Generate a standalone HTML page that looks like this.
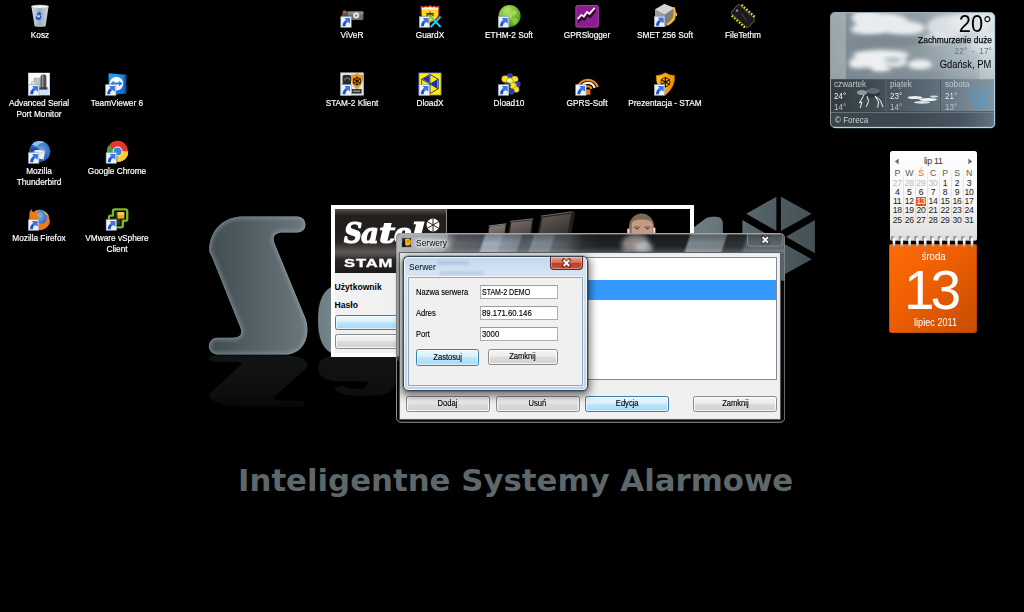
<!DOCTYPE html>
<html lang="pl">
<head>
<meta charset="utf-8">
<title>Pulpit - STAM-2 Klient</title>
<style>
html,body{margin:0;padding:0;background:#000;}
#d{position:relative;width:1024px;height:612px;overflow:hidden;background:#000;font-family:"Liberation Sans",sans-serif;}
#d *{box-sizing:border-box;}
.abs{position:absolute;}
/* desktop icons */
.ic{position:absolute;width:100px;margin-left:-50px;text-align:center;color:#fff;font-size:9.2px;line-height:10.8px;text-shadow:0 0 1.5px #000,0 1px 1.5px #000;white-space:nowrap;transform:scaleX(.9);-webkit-text-stroke:0.2px #fff;}
.ig{position:absolute;width:24px;height:24px;}
.sc{position:absolute;left:0;bottom:0;width:9px;height:9px;background:#f4f6fa;border:0.5px solid #9aa;}
.sc:after{content:"";position:absolute;left:2px;top:2px;width:5px;height:5px;background:#1c55c8;clip-path:polygon(20% 0,100% 0,100% 80%,75% 55%,30% 100%,0 70%,45% 25%);}
#slogan{position:absolute;left:238px;top:461.8px;font-family:"DejaVu Sans","Liberation Sans",sans-serif;font-weight:bold;font-size:30.8px;line-height:36px;color:#5e6769;white-space:nowrap;letter-spacing:0px;}

/* windows */
#login{position:absolute;left:331px;top:205px;width:362.5px;height:151.7px;background:#fff;}
#ban{position:absolute;left:4px;top:4px;width:355px;height:63.6px;background:#000;overflow:hidden;}
#banl{position:absolute;left:0;top:0;width:112.3px;height:63.6px;background:linear-gradient(180deg,#56524f 0,#3c3836 5%,#231f1e 11%,#221e1d 40%,#2c2827 52%,#45413f 60%,#5b5856 67%,#4e4a48 72%,#2b2726 79%,#1d1918 100%);border-right:1px solid #8e8b89;}
#logo{position:absolute;left:8.6px;top:6.2px;font:italic bold 28.6px/36px "DejaVu Serif",serif;color:#fff;letter-spacing:0;-webkit-text-stroke:1.2px #fff;white-space:nowrap;}
#logo span{display:inline-block;transform-origin:0 50%;}
#stam{position:absolute;left:9px;top:50.2px;font:bold 10px/10px "Liberation Sans",sans-serif;color:#fff;transform-origin:0 50%;transform:scaleX(1.66);letter-spacing:0.5px;white-space:nowrap;-webkit-text-stroke:0.3px #fff;}
#lbody{position:absolute;left:4px;top:67.6px;width:355px;height:80.6px;background:#f1f1f1;}
.lb{position:absolute;left:0.5px;font:bold 8.6px/11px "Liberation Sans",sans-serif;color:#000;}
.btn{position:absolute;height:15.8px;border:1px solid #8a8a8a;border-radius:2.5px;background:linear-gradient(180deg,#f4f4f4 0,#ececec 45%,#dddddd 50%,#d0d0d0 100%);box-shadow:inset 0 0 0 1px rgba(255,255,255,.75);font:8.8px/13.4px "Liberation Sans",sans-serif;color:#000;text-align:center;white-space:nowrap;}
.btn span,.fl span,.inp span{display:inline-block;transform:scaleX(.86);transform-origin:50% 50%;}
.fl span,.inp span{transform-origin:0 50%;}
.fl,.inp,.btn{-webkit-text-stroke:0.15px #000;}
.btn.hot{border-color:#3c7fb1;background:linear-gradient(180deg,#eaf6fd 0,#d9f0fc 45%,#bee6fd 50%,#a7d9f5 100%);box-shadow:inset 0 0 0 1px rgba(255,255,255,.6);}
#srv{position:absolute;left:396px;top:233.3px;width:389.3px;height:189.8px;border-radius:5px 5px 3px 3px;background:#060707;overflow:hidden;}
#srvglass{position:absolute;left:0;top:0;}
#srvcl{position:absolute;left:4.4px;top:19.4px;width:379.8px;height:166.2px;background:#f0f0f0;border:1px solid #e9ecee;box-shadow:0 0 0 0.9px #5d6164;}
#lst{position:absolute;left:2.4px;top:3.4px;width:373.4px;height:122.8px;background:#fff;border:1px solid #828790;}
#sel{position:absolute;left:0;right:0;top:21.6px;height:20.8px;background:#3399ff;}
.ttl{position:absolute;font:9.6px/12px "Liberation Sans",sans-serif;color:#000;white-space:nowrap;transform-origin:0 50%;transform:scaleX(.88);}
#dlg{position:absolute;left:403px;top:256px;width:185px;height:135px;border-radius:5px;border:1px solid #3b4653;background:linear-gradient(180deg,#c3d7ec 0,#d5e4f3 12%,#cfe0f1 18%,#bdd3ea 100%);box-shadow:0 0 0 0.6px rgba(0,0,0,.35),0 3px 9px 2px rgba(0,0,0,.55),inset 0 0 0 1px rgba(255,255,255,.75);}
#dlgcl{position:absolute;left:4px;top:20px;width:175px;height:109px;background:#f0f0f0;border:1px solid #8fa7bf;box-shadow:0 0 0 1px rgba(255,255,255,.7);}
#dclose{position:absolute;left:146.4px;top:-0.2px;width:33px;height:13.2px;border:1px solid #5a2820;border-top:0;border-radius:0 0 4px 4px;background:linear-gradient(180deg,#e5a396 0,#d4705d 45%,#c23a25 52%,#c8513a 100%);box-shadow:inset 0 0 0 1px rgba(255,255,255,.35);color:#fff;text-align:center;font:bold 10px/11px "Liberation Sans",sans-serif;text-shadow:0 0 2px #3a0d06;}
.fl{position:absolute;left:6.2px;font:8.8px/11px "Liberation Sans",sans-serif;color:#000;white-space:nowrap;}
.inp{position:absolute;left:70.3px;width:78.2px;height:14px;background:#fff;border:1px solid #abadb3;border-top-color:#9a9ca2;font:8.6px/12px "Liberation Sans",sans-serif;color:#000;padding-left:1.5px;white-space:nowrap;}

/* weather gadget */
#wx{position:absolute;left:830.6px;top:12.8px;width:163.6px;height:113.8px;border-radius:4px;overflow:hidden;background:#8b99a1;box-shadow:0 0 0 0.9px rgba(215,230,240,.75),0.7px 0.8px 0 0.5px rgba(110,195,235,.85);}
#wx .r{position:absolute;right:2.6px;text-align:right;white-space:nowrap;color:#000;transform-origin:100% 50%;}
#wx .dn{position:absolute;top:65.4px;font:9.6px/11px "Liberation Sans",sans-serif;color:#c2cad0;white-space:nowrap;transform-origin:0 50%;transform:scaleX(.85);}
#wx .hi{position:absolute;top:77.4px;font:9.8px/11px "Liberation Sans",sans-serif;color:#fff;text-shadow:0 0 1px #222;white-space:nowrap;transform-origin:0 50%;transform:scaleX(.82);}
#wx .lo{position:absolute;top:88px;font:9.8px/11px "Liberation Sans",sans-serif;color:#b8c1c7;white-space:nowrap;transform-origin:0 50%;transform:scaleX(.82);}
/* calendar gadget */
#cal1{position:absolute;left:889.6px;top:151px;width:87.8px;height:89.7px;border-radius:2.5px;background:linear-gradient(180deg,#fefefe 0,#f7f7f7 55%,#e6e6e6 85%,#dedede 100%);overflow:hidden;}
#cal1 span{position:absolute;width:14px;margin-left:-7px;text-align:center;font:8.6px/10px "Liberation Sans",sans-serif;color:#1c1c1c;letter-spacing:-0.3px;}
#cal1 span.h{color:#5a5a5a;font-size:8.8px;}
#cal1 span.g{color:#bdbdbd;}
#cal1 i{position:absolute;top:17px;width:1px;height:58px;background:linear-gradient(180deg,rgba(0,0,0,0),rgba(0,0,0,.09) 20%,rgba(0,0,0,.09) 80%,rgba(0,0,0,0));}
#cal2{position:absolute;left:889.4px;top:244px;width:87.2px;height:89px;border-radius:2px 2px 3px 3px;background:linear-gradient(135deg,#ff6b08 0,#f06003 40%,#c64c03 100%);color:#fff;text-align:center;box-shadow:inset 0 0 0 0.6px rgba(120,40,0,.5);}
</style>
</head>
<body>
<div id="d">

<!-- wallpaper -->
<svg class="abs" style="left:0;top:0" width="1024" height="612" viewBox="0 0 1024 612">
<defs>
<linearGradient id="gS" gradientUnits="userSpaceOnUse" x1="209" y1="0" x2="815" y2="0"><stop offset="0" stop-color="#404c51"/><stop offset="0.16" stop-color="#6a777c"/><stop offset="0.2" stop-color="#74848a"/><stop offset="0.5" stop-color="#7d8d93"/><stop offset="0.82" stop-color="#6c7b80"/><stop offset="0.91" stop-color="#536266"/><stop offset="1" stop-color="#435055"/></linearGradient>
<linearGradient id="gA" x1="0" x2="1" y1="0" y2="0"><stop offset="0" stop-color="#66727a"/><stop offset="1" stop-color="#30373a"/></linearGradient>
<linearGradient id="fade" x1="0" x2="0" y1="0" y2="1"><stop offset="0" stop-color="#fff" stop-opacity="0.15"/><stop offset="0.75" stop-color="#fff" stop-opacity="0.1"/><stop offset="1" stop-color="#fff" stop-opacity="0.04"/></linearGradient>
<clipPath id="cS"><use href="#S"/></clipPath><filter id="glowb" x="-10%" y="-10%" width="120%" height="120%"><feGaussianBlur stdDeviation="1.6"/></filter>
<mask id="mfade"><rect x="180" y="355" width="700" height="54" fill="url(#fade)"/></mask>
<path id="S" d="M209.200 250 C209.200 231 223.500 216.400 242 216.400 L297.400 216.400 A8.100 8.100 0 0 1 297.400 232.600 L283 232.600 C275.500 232.600 271.800 236.500 274.400 243 L305.500 318.400 C311 334 305 354.600 283.800 354.600 L217.200 354.600 A8.450 8.450 0 0 1 217.200 337.700 L233 337.700 C240.500 337.700 243 333.500 240.300 327.500 L212 257 C210 253 209.200 252 209.200 250 Z"/>
</defs>
<use href="#S" fill="url(#gS)"/>
<g clip-path="url(#cS)"><use href="#S" fill="none" stroke="#a9b9bf" stroke-opacity=".3" stroke-width="6" filter="url(#glowb)"/><use href="#S" fill="none" stroke="#b5c3c8" stroke-opacity=".28" stroke-width="1.4"/></g>
<!-- letter a (mostly hidden) -->
<g id="A" fill="url(#gS)"><path d="M318 320 C318 296 326 284 345 284 L384 284 L384 356 L345 356 C326 356 318 344 318 320 Z"/><path d="M334 268 Q338 245 362 245 Q396 245 396 280 L396 355.500 L368 355.500 L368 286 Q368 264 356 264 Q346 264 344 272 Z"/></g>
<!-- letter l top -->
<path d="M690 230.200 L705.500 218.600 Q708.500 216.800 712 216.800 L716 216.800 Q722.800 216.800 722.800 224 L722.800 240 L690 240 Z" fill="url(#gS)"/>
<!-- hexagon mark -->
<g fill="url(#gS)">
<polygon points="776.400,196.700 746.200,213.800 776.400,230.900"/>
<polygon points="780.900,196.700 811.800,213.800 780.900,230.900"/>
<polygon points="814.900,220.100 814.900,253.300 786,236.700"/>
<polygon points="742.400,220.100 742.400,253.300 771.300,236.700"/>
<polygon points="780.900,276.300 811.800,259.200 780.900,242.100"/>
<polygon points="776.400,276.300 746.200,259.200 776.400,242.100"/>
</g>
<!-- floor reflections -->
<g mask="url(#mfade)">
<g transform="translate(0,486.700) scale(1,-0.37)" fill="#7c888c">
<use href="#S"/>
<g fill="#7c888c"><path d="M318 320 C318 296 326 284 345 284 L384 284 L384 356 L345 356 C326 356 318 344 318 320 Z"/><path d="M334 268 Q338 245 362 245 Q396 245 396 280 L396 355.500 L368 355.500 L368 286 Q368 264 356 264 Q346 264 344 272 Z"/></g>
</g>
</g>
</svg>
<div id="slogan">Inteligentne Systemy Alarmowe</div>


<!-- desktop icons -->
<svg class="abs" style="left:27.5px;top:4px" width="24" height="24" viewBox="0 0 24 24"><defs><linearGradient id="bin" x1="0" x2="1"><stop offset="0" stop-color="#e8eef4"/><stop offset="0.5" stop-color="#aebccb"/><stop offset="1" stop-color="#dfe7ef"/></linearGradient></defs><path d="M3.4 2.2L20.6 2.2 17.6 22.2Q12 23.6 6.6 22.2Z" fill="url(#bin)" opacity="0.92"/><ellipse cx="12" cy="2.6" rx="8.6" ry="1.5" fill="#f4f7fa" stroke="#c3ccd6" stroke-width="0.6"/><path d="M9.2 9.2l2.6-1.6 1.8 2.6-1.2.6 1.2 2.2-1.6 3-3.4-.2-1.2-2.6 1.6-1.2z" fill="#1f5fd3"/><circle cx="10.6" cy="12.2" r="1.2" fill="#cfe0f5"/></svg>
<div class="ic" style="left:39.5px;top:30.1px">Kosz</div>
<svg class="abs" style="left:340px;top:4px" width="24" height="24" viewBox="0 0 24 24"><rect x="7" y="7.4" width="16.4" height="8.6" rx="1.2" fill="#6e6e6e"/><rect x="7" y="7.4" width="16.4" height="3" rx="1" fill="#8c8c8c"/><circle cx="16.2" cy="11.6" r="3" fill="#e9e9e9"/><circle cx="16.2" cy="11.6" r="1.2" fill="#777"/><path d="M1.5 13 Q1.5 7 5 7 Q8 7 8.2 12 L8 14 L1.5 14Z" fill="#6a4a3c"/><circle cx="4.6" cy="8" r="1.8" fill="#8a6a58"/><g transform="translate(0.5,13.2)"><rect x="0.3" y="-0.500" width="10.400" height="10.600" fill="#eef2f8" stroke="#96a1b2" stroke-width="0.6"/><path d="M9.400 0.900L9.400 6.300 7.700 4.600C5.900 5.300 5 6.700 4.900 9L2 9C2.100 5.700 3.500 3.600 5.800 2.700L4.100 0.900Z" fill="#1c50c8"/><path d="M9.400 0.900L9.400 6.300 7.700 4.600C6.800 4.900 6.100 5.500 5.600 6.200L4.200 3.600C4.700 3.200 5.200 2.900 5.800 2.700L4.100 0.900Z" fill="#3a78e6"/></g></svg>
<div class="ic" style="left:352px;top:30.1px">ViVeR</div>
<svg class="abs" style="left:418px;top:4px" width="24" height="24" viewBox="0 0 24 24"><path d="M3.2 2.2 Q5.5 4 7.6 2 Q9.6 4 12 1.6 Q14.4 4 16.4 2 Q18.5 4 20.8 2.2 L20.8 10 Q20.8 15 12 18.4 Q3.2 15 3.2 10Z" fill="#f6dc1c" stroke="#c8281e" stroke-width="1.1"/><path d="M3.6 3.2 Q5.5 4.8 7.6 3 Q9.6 4.8 12 2.6 Q14.4 4.8 16.4 3 Q18.5 4.8 20.4 3.2 L20.4 5.4 L3.6 5.4Z" fill="#f2f0ea"/><path d="M8 9.6h8M12 7.4v5.4M8.4 12l3.6-2.6 3.6 2.6" stroke="#5b3a10" stroke-width="1.1" fill="none"/><path d="M12.6 12.6L22.6 23M22.6 12.6L12.6 23" stroke="#19d3f3" stroke-width="2" fill="none"/><g transform="translate(1,13.2)"><rect x="0.3" y="-0.500" width="10.400" height="10.600" fill="#eef2f8" stroke="#96a1b2" stroke-width="0.6"/><path d="M9.400 0.900L9.400 6.300 7.700 4.600C5.900 5.300 5 6.700 4.900 9L2 9C2.100 5.700 3.500 3.600 5.800 2.700L4.100 0.900Z" fill="#1c50c8"/><path d="M9.400 0.900L9.400 6.300 7.700 4.600C6.800 4.900 6.100 5.500 5.600 6.200L4.200 3.600C4.700 3.200 5.200 2.900 5.800 2.700L4.100 0.900Z" fill="#3a78e6"/></g></svg>
<div class="ic" style="left:430px;top:30.1px">GuardX</div>
<svg class="abs" style="left:496.5px;top:4px" width="24" height="24" viewBox="0 0 24 24"><defs><radialGradient id="glb" cx="0.4" cy="0.3" r="0.8"><stop offset="0" stop-color="#b5e06a"/><stop offset="0.6" stop-color="#6cb52e"/><stop offset="1" stop-color="#3f8a1a"/></radialGradient></defs><circle cx="12.6" cy="12" r="11" fill="url(#glb)"/><path d="M8 3.5q4-1.5 6 .6l-1.6 2.6 2.6 1.2 2.4-1.6 2.6 1.4-1.4 3-3 .6-1.2 3.4-3-1.6-.8-3.4-3.2-1.6z" fill="#a9dc62" opacity="0.8"/><path d="M15 15l4-1 2.4 2-2.2 4-3.2 1z" fill="#9ad455" opacity="0.7"/><g transform="translate(1,13.2)"><rect x="0.3" y="-0.500" width="10.400" height="10.600" fill="#eef2f8" stroke="#96a1b2" stroke-width="0.6"/><path d="M9.400 0.900L9.400 6.300 7.700 4.600C5.900 5.300 5 6.700 4.900 9L2 9C2.100 5.700 3.500 3.600 5.800 2.700L4.100 0.900Z" fill="#1c50c8"/><path d="M9.400 0.900L9.400 6.300 7.700 4.600C6.800 4.900 6.100 5.500 5.600 6.200L4.200 3.600C4.700 3.200 5.200 2.900 5.800 2.700L4.100 0.900Z" fill="#3a78e6"/></g></svg>
<div class="ic" style="left:508.5px;top:30.1px">ETHM-2 Soft</div>
<svg class="abs" style="left:575px;top:4px" width="24" height="24" viewBox="0 0 24 24"><rect x="0.4" y="1" width="23.4" height="22.6" rx="2.2" fill="#8d1d8f"/><rect x="0.9" y="1.5" width="22.4" height="21.6" rx="2" fill="none" stroke="#b354b5" stroke-width="0.6"/><path d="M3 16.6l3.8-4.2 2.4 1.8 3.2-4.6 2.4 1.8 5.8-6.6v3.4l-5.6 6.2-2.4-1.8-3.2 4.6-2.4-1.8-4 4.2z" fill="#2b0a2c"/><path d="M2.6 15l3.8-4.2 2.4 1.8 3.2-4.6 2.4 1.8 5.4-6" stroke="#fff" stroke-width="1.7" fill="none" stroke-linejoin="miter"/></svg>
<div class="ic" style="left:587px;top:30.1px">GPRSlogger</div>
<svg class="abs" style="left:652.5px;top:3.4px" width="24" height="24" viewBox="0 0 24 24"><path d="M12.5 12.5 A9.5 9.5 0 1 1 20.8 4.2" stroke="#f2b21a" stroke-width="2.6" fill="none" transform="rotate(150 12.5 12)"/><path d="M2 6.4L11.4 1 21.4 5 21.8 17 12 23.4 2.4 18.4Z" fill="#a9a9a9"/><path d="M2 6.4L11.4 1 21.4 5 12 11.6Z" fill="#d4d4d4"/><path d="M12 11.6L21.4 5 21.8 17 12 23.4Z" fill="#7e7e7e"/><path d="M2 6.4L12 11.6 12 23.4 2.4 18.4Z" fill="#9b9b9b"/><path d="M14 21.6 Q24.6 17 20.6 4.4" stroke="#f4b81c" stroke-width="2.4" fill="none"/><g transform="translate(1,13.8)"><rect x="0.3" y="-0.500" width="10.400" height="10.600" fill="#eef2f8" stroke="#96a1b2" stroke-width="0.6"/><path d="M9.400 0.900L9.400 6.300 7.700 4.600C5.900 5.300 5 6.700 4.900 9L2 9C2.100 5.700 3.500 3.600 5.800 2.700L4.100 0.900Z" fill="#1c50c8"/><path d="M9.400 0.900L9.400 6.300 7.700 4.600C6.800 4.900 6.100 5.500 5.600 6.200L4.200 3.600C4.700 3.200 5.200 2.900 5.800 2.700L4.100 0.900Z" fill="#3a78e6"/></g></svg>
<div class="ic" style="left:664.5px;top:30.1px">SMET 256 Soft</div>
<svg class="abs" style="left:731px;top:4px" width="24" height="24" viewBox="0 0 24 24"><g transform="rotate(42 12 12)"><g fill="#e9d21c"><rect x="3.4" y="3.6" width="1.8" height="3"/><rect x="6.6" y="3.6" width="1.8" height="3"/><rect x="9.8" y="3.6" width="1.8" height="3"/><rect x="13" y="3.6" width="1.8" height="3"/><rect x="16.2" y="3.6" width="1.8" height="3"/><rect x="19.4" y="3.6" width="1.8" height="3"/><rect x="3.4" y="17.4" width="1.8" height="3"/><rect x="6.6" y="17.4" width="1.8" height="3"/><rect x="9.8" y="17.4" width="1.8" height="3"/><rect x="13" y="17.4" width="1.8" height="3"/><rect x="16.2" y="17.4" width="1.8" height="3"/><rect x="19.4" y="17.4" width="1.8" height="3"/></g><rect x="0.6" y="6" width="23" height="12" rx="1" fill="#1b1b1b" stroke="#6d6d6d" stroke-width="0.8"/><circle cx="4" cy="12" r="1.3" fill="#8a8a8a"/><path d="M9 11l8 2" stroke="#555" stroke-width="0.8"/></g></svg>
<div class="ic" style="left:743px;top:30.1px">FileTethm</div>
<svg class="abs" style="left:27px;top:72px" width="24" height="24" viewBox="0 0 24 24"><rect x="1.2" y="0.8" width="21.6" height="22.4" fill="#fbfcfd"/><path d="M11.4 15.4H22.8V23.2H11.4Z" fill="#cfe3f6"/><path d="M7 6.2h6.4v9H7z" fill="#bfc3c7" stroke="#8d9297" stroke-width="0.6"/><path d="M4.4 9.8h5v4.6h-5z" fill="#d9dcdf" stroke="#a0a4a8" stroke-width="0.5"/><rect x="13.6" y="2.4" width="5.8" height="14.6" rx="2.2" fill="#4d4f52"/><rect x="14.8" y="3" width="1.6" height="13.4" fill="#8e9195"/><rect x="12.2" y="15.2" width="8.2" height="2.4" fill="#3d3f42"/><g transform="translate(1.2,13.2)"><rect x="0.3" y="-0.500" width="10.400" height="10.600" fill="#eef2f8" stroke="#96a1b2" stroke-width="0.6"/><path d="M9.400 0.900L9.400 6.300 7.700 4.600C5.900 5.300 5 6.700 4.900 9L2 9C2.100 5.700 3.500 3.600 5.800 2.700L4.100 0.900Z" fill="#1c50c8"/><path d="M9.400 0.900L9.400 6.300 7.700 4.600C6.800 4.900 6.100 5.500 5.600 6.200L4.200 3.600C4.700 3.200 5.200 2.900 5.800 2.700L4.100 0.900Z" fill="#3a78e6"/></g></svg>
<div class="ic" style="left:39px;top:98.1px">Advanced Serial<br>Port Monitor</div>
<svg class="abs" style="left:105px;top:72px" width="24" height="24" viewBox="0 0 24 24"><defs><linearGradient id="tv" x1="0" y1="0" x2="1" y2="1"><stop offset="0" stop-color="#2aa5f0"/><stop offset="1" stop-color="#0a63c8"/></linearGradient></defs><path d="M3.6 1.2L21.2 2.8 21.2 21.6 3.6 23.2Z" fill="url(#tv)"/><path d="M19.4 2.6L21.2 2.8V21.6L19.4 21.8Z" fill="#0a4fa8"/><circle cx="11.4" cy="11.6" r="6.8" fill="#f4f8fc"/><path d="M5.4 11.6l3.4-2.8v1.8h5.2v-1.8l3.4 2.8-3.4 2.8v-1.8h-5.2v1.8z" fill="#1a84de"/><g transform="translate(0.2,13.2)"><rect x="0.3" y="-0.500" width="10.400" height="10.600" fill="#eef2f8" stroke="#96a1b2" stroke-width="0.6"/><path d="M9.400 0.900L9.400 6.300 7.700 4.600C5.900 5.300 5 6.700 4.900 9L2 9C2.100 5.700 3.500 3.600 5.800 2.700L4.100 0.900Z" fill="#1c50c8"/><path d="M9.400 0.900L9.400 6.300 7.700 4.600C6.800 4.900 6.100 5.500 5.600 6.200L4.200 3.600C4.700 3.200 5.200 2.900 5.800 2.700L4.100 0.900Z" fill="#3a78e6"/></g></svg>
<div class="ic" style="left:117px;top:98.1px">TeamViewer 6</div>
<svg class="abs" style="left:340px;top:72px" width="24" height="24" viewBox="0 0 24 24"><rect x="0.6" y="0.8" width="23" height="22.4" fill="#e4e4e4" stroke="#bdbdbd" stroke-width="0.6"/><rect x="2.6" y="3" width="8.4" height="14" rx="1.6" fill="#2a2a2a"/><path d="M4.6 8.4a2.6 2.6 0 0 1 5.2 0" stroke="#8a8a8a" stroke-width="1" fill="none"/><rect x="11.6" y="17" width="10" height="4.6" fill="#333"/><rect x="13" y="18.6" width="7" height="1" fill="#bbb"/><path d="M11.2 3.4Q15.6 3.2 17 1.4 18.6 3.2 22.8 3.4 23.2 12 17 16.8 10.8 12 11.2 3.4Z" fill="#f49a16" stroke="#b96a06" stroke-width="0.5"/><g stroke="#201400" stroke-width="1.1"><path d="M17 4.6v9M13.2 6.8l7.6 4.6M13.2 11.4l7.6-4.6"/></g><circle cx="17" cy="9.1" r="3.6" fill="none" stroke="#201400" stroke-width="0.9"/><g transform="translate(0.6,13.2)"><rect x="0.3" y="-0.500" width="10.400" height="10.600" fill="#eef2f8" stroke="#96a1b2" stroke-width="0.6"/><path d="M9.400 0.900L9.400 6.300 7.700 4.600C5.900 5.300 5 6.700 4.900 9L2 9C2.100 5.700 3.500 3.600 5.800 2.700L4.100 0.900Z" fill="#1c50c8"/><path d="M9.400 0.900L9.400 6.300 7.700 4.600C6.800 4.900 6.100 5.500 5.600 6.200L4.200 3.600C4.700 3.200 5.200 2.900 5.800 2.700L4.100 0.900Z" fill="#3a78e6"/></g></svg>
<div class="ic" style="left:352px;top:98.1px">STAM-2 Klient</div>
<svg class="abs" style="left:418px;top:72px" width="24" height="24" viewBox="0 0 24 24"><rect x="0.8" y="0.8" width="22.4" height="22.4" fill="#ffee00" stroke="#2b3fb4" stroke-width="0.8"/><g fill="#1a2fb0"><path d="M11.4 3.2V11L4.6 7.1Z"/><path d="M19.4 7.6V16.4L12.6 12Z"/><path d="M11.4 13V20.8L4.6 16.9Z"/></g><g stroke="#1a2fb0" stroke-width="0.9" fill="none"><path d="M12 2.4L20.3 7.2V16.8L12 21.6 3.7 16.8V7.2Z"/><path d="M12 2.4V21.6M3.7 7.2L20.3 16.8M3.7 16.8L20.3 7.2"/></g><g transform="translate(0.8,13.2)"><rect x="0.3" y="-0.500" width="10.400" height="10.600" fill="#eef2f8" stroke="#96a1b2" stroke-width="0.6"/><path d="M9.400 0.900L9.400 6.300 7.700 4.600C5.900 5.300 5 6.700 4.900 9L2 9C2.100 5.700 3.500 3.600 5.800 2.700L4.100 0.900Z" fill="#1c50c8"/><path d="M9.400 0.900L9.400 6.300 7.700 4.600C6.800 4.900 6.100 5.500 5.600 6.200L4.200 3.600C4.700 3.200 5.200 2.900 5.800 2.700L4.100 0.900Z" fill="#3a78e6"/></g></svg>
<div class="ic" style="left:430px;top:98.1px">DloadX</div>
<svg class="abs" style="left:496.5px;top:72px" width="24" height="24" viewBox="0 0 24 24"><g stroke="#7a6a00" stroke-width="0.4"><circle cx="13" cy="4.6" r="3.2" fill="#1f3fc0"/><circle cx="8" cy="7" r="3.4" fill="#f6e322"/><circle cx="17.8" cy="7.4" r="3.4" fill="#f6e322"/><circle cx="12.8" cy="9.4" r="3.6" fill="#f9ec52"/><circle cx="20.2" cy="12.4" r="3.2" fill="#1f3fc0"/><circle cx="16.2" cy="14" r="3.4" fill="#f6e322"/><circle cx="19.2" cy="17.6" r="3" fill="#f6e322"/><circle cx="14.4" cy="19.4" r="3" fill="#1f3fc0"/><circle cx="10.4" cy="13.6" r="3.2" fill="#1f3fc0"/></g><circle cx="12" cy="8.4" r="1.1" fill="#fff"/><g transform="translate(1,13.2)"><rect x="0.3" y="-0.500" width="10.400" height="10.600" fill="#eef2f8" stroke="#96a1b2" stroke-width="0.6"/><path d="M9.400 0.900L9.400 6.300 7.700 4.600C5.900 5.300 5 6.700 4.900 9L2 9C2.100 5.700 3.500 3.600 5.800 2.700L4.100 0.900Z" fill="#1c50c8"/><path d="M9.400 0.900L9.400 6.300 7.700 4.600C6.800 4.900 6.100 5.500 5.600 6.200L4.200 3.600C4.700 3.200 5.200 2.900 5.800 2.700L4.100 0.900Z" fill="#3a78e6"/></g></svg>
<div class="ic" style="left:508.5px;top:98.1px">Dload10</div>
<svg class="abs" style="left:575px;top:72px" width="24" height="24" viewBox="0 0 24 24"><g fill="none" stroke-linecap="butt"><path d="M2.6 15.6A10.6 10.6 0 0 1 22.8 15" stroke="#f08a1c" stroke-width="2.4"/><path d="M6 16.4A7 7 0 0 1 19.6 16" stroke="#f5f0ea" stroke-width="2.2"/><path d="M9.4 17A3.6 3.6 0 0 1 16.4 17" stroke="#f08a1c" stroke-width="2.2"/></g><path d="M11 17.4h4.4v5.4H11z" fill="#e7791a"/><g transform="translate(0.4,13.2)"><rect x="0.3" y="-0.500" width="10.400" height="10.600" fill="#eef2f8" stroke="#96a1b2" stroke-width="0.6"/><path d="M9.400 0.900L9.400 6.300 7.700 4.600C5.900 5.300 5 6.700 4.900 9L2 9C2.100 5.700 3.500 3.600 5.800 2.700L4.100 0.900Z" fill="#1c50c8"/><path d="M9.400 0.900L9.400 6.300 7.700 4.600C6.800 4.900 6.100 5.500 5.600 6.200L4.200 3.600C4.700 3.200 5.200 2.900 5.800 2.700L4.100 0.900Z" fill="#3a78e6"/></g></svg>
<div class="ic" style="left:587px;top:98.1px">GPRS-Soft</div>
<svg class="abs" style="left:652.5px;top:72px" width="24" height="24" viewBox="0 0 24 24"><defs><linearGradient id="shd" x1="0" x2="1"><stop offset="0" stop-color="#ffc21c"/><stop offset="1" stop-color="#f28a12"/></linearGradient></defs><path d="M3.2 3.6Q8.6 3.4 12.4 0.8 16 3.4 21.6 3.6 22.4 15 12.4 23 2.6 15 3.2 3.6Z" fill="url(#shd)" stroke="#c77808" stroke-width="0.6"/><g stroke="#1c1200" stroke-width="1.2"><path d="M12.4 5v10.4M8 7.6l8.8 5.2M8 12.8l8.8-5.2"/></g><circle cx="12.4" cy="10.2" r="4.4" fill="none" stroke="#1c1200" stroke-width="0.9"/><g transform="translate(1,13.2)"><rect x="0.3" y="-0.500" width="10.400" height="10.600" fill="#eef2f8" stroke="#96a1b2" stroke-width="0.6"/><path d="M9.400 0.900L9.400 6.300 7.700 4.600C5.900 5.300 5 6.700 4.900 9L2 9C2.100 5.700 3.500 3.600 5.800 2.700L4.100 0.900Z" fill="#1c50c8"/><path d="M9.400 0.900L9.400 6.300 7.700 4.600C6.800 4.900 6.100 5.500 5.600 6.200L4.200 3.600C4.700 3.200 5.200 2.900 5.800 2.700L4.100 0.900Z" fill="#3a78e6"/></g></svg>
<div class="ic" style="left:664.5px;top:98.1px">Prezentacja - STAM</div>
<svg class="abs" style="left:27px;top:139.6px" width="24" height="24" viewBox="0 0 24 24"><defs><radialGradient id="tb" cx="0.55" cy="0.4" r="0.7"><stop offset="0" stop-color="#6aa6ea"/><stop offset="0.7" stop-color="#2a62b8"/><stop offset="1" stop-color="#173f86"/></radialGradient></defs><circle cx="12.8" cy="11.6" r="10.6" fill="url(#tb)"/><path d="M5 4.4Q10-1 18 2.4 12 2.6 9.6 6.6z" fill="#8ec2f4"/><path d="M7.6 9.4l10.4 1.4-1.4 8.6-9.6-1.6z" fill="#eef0f2"/><path d="M7.6 9.4l4.6 5 5.8-3.6" stroke="#b9bdc2" stroke-width="0.7" fill="none"/><path d="M3 8Q8 6 13 9.6 8 9 4 12.6z" fill="#1d4c9c"/><g transform="translate(1.2,13.2)"><rect x="0.3" y="-0.500" width="10.400" height="10.600" fill="#eef2f8" stroke="#96a1b2" stroke-width="0.6"/><path d="M9.400 0.900L9.400 6.300 7.700 4.600C5.900 5.300 5 6.700 4.900 9L2 9C2.100 5.700 3.500 3.600 5.800 2.700L4.100 0.900Z" fill="#1c50c8"/><path d="M9.400 0.900L9.400 6.300 7.700 4.600C6.800 4.900 6.100 5.500 5.600 6.200L4.200 3.600C4.700 3.200 5.200 2.900 5.800 2.700L4.100 0.900Z" fill="#3a78e6"/></g></svg>
<div class="ic" style="left:39px;top:166.3px">Mozilla<br>Thunderbird</div>
<svg class="abs" style="left:105px;top:139.6px" width="24" height="24" viewBox="0 0 24 24"><circle cx="12.6" cy="11.4" r="10.6" fill="#e2382c"/><path d="M12.6 11.4L3.4 6.1A10.6 10.6 0 0 0 12.6 22Z" fill="#3aa64a"/><path d="M12.6 11.4L3.4 6.1A10.6 10.6 0 0 0 7.3 20.6Z" fill="#3aa64a"/><path d="M12.6 11.4H23.2A10.6 10.6 0 0 1 12.6 22L12.6 22Z" fill="#f9cf2e"/><path d="M12.6 11.4L17.9 20.6A10.6 10.6 0 0 1 12.6 22Z" fill="#f9cf2e"/><path d="M12.6 11.4L23.2 11.4A10.6 10.6 0 0 1 17.9 20.6Z" fill="#f9cf2e"/><circle cx="12.6" cy="11.4" r="4.9" fill="#f4f6f8"/><circle cx="12.6" cy="11.4" r="3.9" fill="#3f82e6"/><g transform="translate(0.8,13.2)"><rect x="0.3" y="-0.500" width="10.400" height="10.600" fill="#eef2f8" stroke="#96a1b2" stroke-width="0.6"/><path d="M9.400 0.900L9.400 6.300 7.700 4.600C5.900 5.300 5 6.700 4.900 9L2 9C2.100 5.700 3.500 3.600 5.800 2.700L4.100 0.900Z" fill="#1c50c8"/><path d="M9.400 0.900L9.400 6.300 7.700 4.600C6.800 4.900 6.100 5.500 5.600 6.200L4.200 3.600C4.700 3.200 5.200 2.900 5.800 2.700L4.100 0.900Z" fill="#3a78e6"/></g></svg>
<div class="ic" style="left:117px;top:166.3px">Google Chrome</div>
<svg class="abs" style="left:27px;top:206.6px" width="24" height="24" viewBox="0 0 24 24"><defs><radialGradient id="ffg" cx="0.45" cy="0.35" r="0.7"><stop offset="0" stop-color="#7fc0f4"/><stop offset="0.7" stop-color="#2c62c0"/><stop offset="1" stop-color="#1b3f8c"/></radialGradient></defs><circle cx="12.6" cy="11.8" r="9.4" fill="url(#ffg)"/><path d="M2.4 8.8Q2 4.6 4.6 2.2 5 4.6 6.6 5.4 9 2.6 12.6 3.4 9.600 5.400 10 8.400 12.200 9 12.600 11 10.600 12.600 9 12 11 17.600 16.600 16.400 20.800 13.400 19.400 7.600 23.200 11.600 22.800 15.600 21.200 21.600 14.600 23 7.200 23.400 3.400 18.200 1.400 13.400 2.400 8.800Z" fill="#ef7a1a"/><path d="M16 4Q21.600 6 22.800 12 21.400 8.600 18.800 7.600z" fill="#f9b93c"/><g transform="translate(1,13.2)"><rect x="0.3" y="-0.500" width="10.400" height="10.600" fill="#eef2f8" stroke="#96a1b2" stroke-width="0.6"/><path d="M9.400 0.900L9.400 6.300 7.700 4.600C5.900 5.300 5 6.700 4.900 9L2 9C2.100 5.700 3.500 3.600 5.800 2.700L4.100 0.900Z" fill="#1c50c8"/><path d="M9.400 0.900L9.400 6.300 7.700 4.600C6.800 4.900 6.100 5.500 5.600 6.200L4.200 3.600C4.700 3.200 5.200 2.900 5.800 2.700L4.100 0.900Z" fill="#3a78e6"/></g></svg>
<div class="ic" style="left:39px;top:233.3px">Mozilla Firefox</div>
<svg class="abs" style="left:105px;top:206.6px" width="24" height="24" viewBox="0 0 24 24"><g fill="none" stroke-linejoin="round"><path d="M9.800 2.400H20.400Q22.200 2.400 22.200 4.200V12Q22.200 13.800 20.400 13.800H17.800V18.600Q17.800 20.400 16 20.400H5.800Q4 20.400 4 18.600V10.400Q4 8.600 5.800 8.600H8V4.200Q8 2.400 9.800 2.400Z" stroke="#79b829" stroke-width="2.4"/></g><rect x="10.400" y="4.800" width="9.400" height="6.600" fill="#2b3a1a"/><rect x="6.400" y="11" width="9" height="7" fill="#2b3a1a"/><rect x="12.600" y="5.200" width="6.600" height="6.400" fill="#f3a81e"/><rect x="12.600" y="5.200" width="6.600" height="3" fill="#f9cb55"/><g transform="translate(0.8,13.2)"><rect x="0.3" y="-0.500" width="10.400" height="10.600" fill="#eef2f8" stroke="#96a1b2" stroke-width="0.6"/><path d="M9.400 0.900L9.400 6.300 7.700 4.600C5.900 5.300 5 6.700 4.900 9L2 9C2.100 5.700 3.500 3.600 5.800 2.700L4.100 0.900Z" fill="#1c50c8"/><path d="M9.400 0.900L9.400 6.300 7.700 4.600C6.800 4.900 6.100 5.500 5.600 6.200L4.200 3.600C4.700 3.200 5.200 2.900 5.800 2.700L4.100 0.900Z" fill="#3a78e6"/></g></svg>
<div class="ic" style="left:117px;top:233.3px">VMware vSphere<br>Client</div>

<!-- weather gadget -->
<div id="wx">
 <svg class="abs" style="left:0;top:0" width="163.6" height="113.8" viewBox="0 0 163.6 113.8">
  <defs>
   <linearGradient id="sky" x1="0" y1="0" x2="1" y2="0"><stop offset="0" stop-color="#7a8790"/><stop offset="0.12" stop-color="#818e97"/><stop offset="0.55" stop-color="#8e9ba3"/><stop offset="0.8" stop-color="#aebcc4"/><stop offset="1" stop-color="#cbdbe3"/></linearGradient>
   <linearGradient id="skyv" x1="0" y1="0" x2="0" y2="1"><stop offset="0" stop-color="#dfe9ee" stop-opacity=".08"/><stop offset="0.5" stop-color="#8a979f" stop-opacity="0"/><stop offset="1" stop-color="#66727a" stop-opacity=".35"/></linearGradient>
   <linearGradient id="fc" x1="0" y1="0" x2="1" y2="0"><stop offset="0" stop-color="#333c43"/><stop offset="0.25" stop-color="#3f4a51"/><stop offset="0.6" stop-color="#5a6b75"/><stop offset="0.9" stop-color="#7b8e9b"/><stop offset="1" stop-color="#8496a3"/></linearGradient>
   <linearGradient id="ft" x1="0" y1="0" x2="1" y2="0"><stop offset="0" stop-color="#3a444b"/><stop offset="0.5" stop-color="#3e4850"/><stop offset="0.8" stop-color="#485560"/><stop offset="1" stop-color="#62727e"/></linearGradient>
   <filter id="b2" x="-30%" y="-30%" width="160%" height="160%"><feGaussianBlur stdDeviation="2.1"/></filter>
   <filter id="b1" x="-20%" y="-20%" width="140%" height="140%"><feGaussianBlur stdDeviation="0.7"/></filter>
  </defs>
  <rect width="163.6" height="67" fill="url(#sky)"/>
  <rect width="163.6" height="67" fill="url(#skyv)"/>
  <g filter="url(#b2)" fill="#e8ecef">
   <ellipse cx="36" cy="5" rx="15" ry="8"/><ellipse cx="52" cy="10" rx="26" ry="10"/><ellipse cx="72" cy="15" rx="22" ry="7"/><ellipse cx="40" cy="16" rx="20" ry="6"/>
   <ellipse cx="118" cy="14" rx="22" ry="12" opacity=".8"/><ellipse cx="140" cy="8" rx="22" ry="10" opacity=".7"/><ellipse cx="105" cy="26" rx="14" ry="5" opacity=".6"/><ellipse cx="150" cy="27" rx="14" ry="12" opacity=".45"/>
  </g>
  <g filter="url(#b2)" fill="#7b8993" opacity=".9"><ellipse cx="52" cy="28.500" rx="36" ry="6"/><ellipse cx="30" cy="33" rx="14" ry="4"/></g>
  <g filter="url(#b2)" fill="#edf0f2">
   <ellipse cx="50" cy="42" rx="28" ry="5"/><ellipse cx="40" cy="49" rx="22" ry="6"/><ellipse cx="64" cy="49" rx="12" ry="5"/><ellipse cx="89" cy="51.500" rx="12" ry="5"/><ellipse cx="50" cy="56.500" rx="10" ry="3"/><ellipse cx="27" cy="52" rx="9" ry="3.500" opacity=".9"/>
  </g>
  <g filter="url(#b2)" fill="#8a98a2" opacity=".55"><ellipse cx="62" cy="47" rx="9" ry="3"/></g>
  <g filter="url(#b2)" fill="#7f8d97" opacity=".7"><ellipse cx="70" cy="62" rx="44" ry="3"/></g>
  <rect x="0" y="0" width="14.800" height="113.800" fill="#fff" opacity=".24"/>
  <rect x="148.600" y="0" width="15" height="113.800" fill="#fff" opacity=".19"/>
  <rect x="0" y="66.2" width="163.6" height="33" fill="url(#fc)"/>
  <rect x="0" y="99.200" width="163.600" height="14.600" fill="url(#ft)"/>
  <rect x="0" y="98.4" width="163.6" height="0.9" fill="#39424a"/><rect x="0" y="99.3" width="163.6" height="0.7" fill="#8b979f" opacity=".7"/>
  <rect x="53.6" y="66.6" width="0.9" height="31.6" fill="#39424a"/><rect x="54.5" y="66.6" width="0.7" height="31.6" fill="#8b979f" opacity=".6"/>
  <rect x="109.4" y="66.6" width="0.9" height="31.6" fill="#39424a"/><rect x="110.3" y="66.6" width="0.7" height="31.6" fill="#8b979f" opacity=".6"/>
  <!-- storm -->
  <g filter="url(#b1)"><ellipse cx="38" cy="80.6" rx="11.5" ry="4.2" fill="#2e353c"/><ellipse cx="42" cy="78" rx="7" ry="3" fill="#5d6770"/><ellipse cx="31" cy="79.6" rx="5" ry="2.6" fill="#8e99a2"/></g>
  <path d="M33 82l-4.600 8 2.600-1-1.800 6M36 83l1.600 5.400-2.400 5.400M44 83l3.600 6-1 5.600M44 83l5.400 4.400 2.600 6.800" stroke="#f3f5f6" stroke-width="1" fill="none"/>
  <!-- thin clouds -->
  <g filter="url(#b1)" fill="#eef1f3"><ellipse cx="84" cy="84.6" rx="7.500" ry="1.500"/><ellipse cx="97" cy="86.600" rx="9" ry="1.600"/><ellipse cx="91" cy="89.400" rx="8" ry="1.300" opacity=".9"/><ellipse cx="103" cy="83.600" rx="4" ry="1.100" opacity=".8"/></g>
  <!-- rain -->
  <g fill="#389ff0"><path id="dr" d="M0-2.700C1.600-.5 1.900.8 0 1.800-1.900.8-1.600-.5 0-2.700Z" transform="translate(140.600,82)"/><use href="#dr" x="5.600" y="-3.600"/><use href="#dr" x="9.800" y=".8"/><use href="#dr" x="14.800" y="-2.400"/><use href="#dr" x="2.800" y="5"/><use href="#dr" x="8.400" y="6.400"/><use href="#dr" x="13.400" y="4.600"/><use href="#dr" x="5.400" y="11.200"/><use href="#dr" x="11.400" y="11.800"/><use href="#dr" x="16.400" y="9.600"/></g>
 </svg>
 <div class="r" style="top:-0.5px;right:2px;font:23px/24px 'Liberation Sans',sans-serif;transform:scaleX(.95)">20°</div>
 <div class="r" style="top:21.6px;font:9.8px/12px 'Liberation Sans',sans-serif;transform:scaleX(.86);-webkit-text-stroke:0.25px #000">Zachmurzenie duże</div>
 <div class="r" style="top:31.8px;font:9.6px/12px 'Liberation Sans',sans-serif;color:#69757d;transform:scaleX(.87)">22°&nbsp; -&nbsp; 17°</div>
 <div class="r" style="top:46.4px;font:10.4px/12px 'Liberation Sans',sans-serif;transform:scaleX(.9)">Gdańsk, PM</div>
 <div class="dn" style="left:3.8px">czwartek</div><div class="dn" style="left:59.4px">piątek</div><div class="dn" style="left:114.4px">sobota</div>
 <div class="hi" style="left:3.6px">24°</div><div class="hi" style="left:59.2px">23°</div><div class="hi" style="left:114.2px">21°</div>
 <div class="lo" style="left:3.6px">14°</div><div class="lo" style="left:59.2px">14°</div><div class="lo" style="left:114.2px">13°</div>
 <div class="abs" style="left:4px;top:101.6px;font:9.4px/11px 'Liberation Sans',sans-serif;color:#cdd4d9;white-space:nowrap;transform-origin:0 50%;transform:scaleX(.86)">© Foreca</div>
</div>

<!-- calendar gadget -->
<div id="cal1">
<i style="left:13.6px"></i>
<i style="left:25.6px"></i>
<i style="left:37.5px"></i>
<i style="left:49.5px"></i>
<i style="left:61.5px"></i>
<i style="left:73.4px"></i>
<span class="h" style="left:43.6px;top:4.8px;width:40px;margin-left:-20px;color:#333">lip 11</span>
<svg class="abs" style="left:4.4px;top:6.6px" width="6" height="7" viewBox="0 0 6 7"><path d="M4.6.6V6.200L.8 3.400Z" fill="#6a6a6a"/></svg>
<svg class="abs" style="left:77.4px;top:6.6px" width="6" height="7" viewBox="0 0 6 7"><path d="M1.400.6V6.200L5.200 3.400Z" fill="#6a6a6a"/></svg>
<span class="h" style="left:7.6px;top:17.4px">P</span>
<span class="h" style="left:19.6px;top:17.4px">W</span>
<span class="h" style="left:31.5px;top:17.4px;color:#e8650e">Ś</span>
<span class="h" style="left:43.5px;top:17.4px">C</span>
<span class="h" style="left:55.5px;top:17.4px">P</span>
<span class="h" style="left:67.5px;top:17.4px">S</span>
<span class="h" style="left:79.4px;top:17.4px">N</span>
<span class="g" style="left:7.6px;top:26.7px">27</span>
<span class="g" style="left:19.6px;top:26.7px">28</span>
<span class="g" style="left:31.5px;top:26.7px">29</span>
<span class="g" style="left:43.5px;top:26.7px">30</span>
<span style="left:55.5px;top:26.7px">1</span>
<span style="left:67.5px;top:26.7px">2</span>
<span style="left:79.4px;top:26.7px">3</span>
<span style="left:7.6px;top:35.9px">4</span>
<span style="left:19.6px;top:35.9px">5</span>
<span style="left:31.5px;top:35.9px">6</span>
<span style="left:43.5px;top:35.9px">7</span>
<span style="left:55.5px;top:35.9px">8</span>
<span style="left:67.5px;top:35.9px">9</span>
<span style="left:79.4px;top:35.9px">10</span>
<span style="left:7.6px;top:45.2px">11</span>
<span style="left:19.6px;top:45.2px">12</span>
<b class="abs" style="left:26.5px;top:45.8px;width:10px;height:8.8px;background:#e8590c"></b>
<span style="left:31.5px;top:45.2px;color:#fff">13</span>
<span style="left:43.5px;top:45.2px">14</span>
<span style="left:55.5px;top:45.2px">15</span>
<span style="left:67.5px;top:45.2px">16</span>
<span style="left:79.4px;top:45.2px">17</span>
<span style="left:7.6px;top:54.4px">18</span>
<span style="left:19.6px;top:54.4px">19</span>
<span style="left:31.5px;top:54.4px">20</span>
<span style="left:43.5px;top:54.4px">21</span>
<span style="left:55.5px;top:54.4px">22</span>
<span style="left:67.5px;top:54.4px">23</span>
<span style="left:79.4px;top:54.4px">24</span>
<span style="left:7.6px;top:63.7px">25</span>
<span style="left:19.6px;top:63.7px">26</span>
<span style="left:31.5px;top:63.7px">27</span>
<span style="left:43.5px;top:63.7px">28</span>
<span style="left:55.5px;top:63.7px">29</span>
<span style="left:67.5px;top:63.7px">30</span>
<span style="left:79.4px;top:63.7px">31</span>
</div>
<div id="cal2">
<div class="abs" style="left:0.6px;width:100%;top:7.4px;font:10.4px/12px 'Liberation Sans',sans-serif;transform:scaleX(.92)">środa</div>
<div class="abs" style="left:0;width:100%;top:18.6px;font:55px/55px 'Liberation Sans',sans-serif;letter-spacing:-4px;text-indent:-5px">13</div>
<div class="abs" style="left:2.4px;width:100%;top:73px;font:10.4px/12px 'Liberation Sans',sans-serif;transform:scaleX(.88)">lipiec 2011</div>
</div>
<svg class="abs" style="left:889px;top:234px" width="89" height="15" viewBox="889 234 89 15"><defs><linearGradient id="rg" x1="0" y1="0" x2="0" y2="1"><stop offset="0" stop-color="#ffffff"/><stop offset="0.55" stop-color="#f2f4f6"/><stop offset="1" stop-color="#7f8c98"/></linearGradient></defs><rect x="889.6" y="240.7" width="87.8" height="3.4" fill="#000"/><rect x="891.00" y="236.300" width="3.400" height="3.500" fill="#8b8b8b"/><rect x="892.70" y="237.600" width="2.600" height="9.500" rx="1.200" fill="url(#rg)"/><rect x="898.80" y="236.300" width="3.400" height="3.500" fill="#8b8b8b"/><rect x="900.50" y="237.600" width="2.600" height="9.500" rx="1.200" fill="url(#rg)"/><rect x="906.60" y="236.300" width="3.400" height="3.500" fill="#8b8b8b"/><rect x="908.30" y="237.600" width="2.600" height="9.500" rx="1.200" fill="url(#rg)"/><rect x="914.40" y="236.300" width="3.400" height="3.500" fill="#8b8b8b"/><rect x="916.10" y="237.600" width="2.600" height="9.500" rx="1.200" fill="url(#rg)"/><rect x="922.20" y="236.300" width="3.400" height="3.500" fill="#8b8b8b"/><rect x="923.90" y="237.600" width="2.600" height="9.500" rx="1.200" fill="url(#rg)"/><rect x="930.00" y="236.300" width="3.400" height="3.500" fill="#8b8b8b"/><rect x="931.70" y="237.600" width="2.600" height="9.500" rx="1.200" fill="url(#rg)"/><rect x="937.80" y="236.300" width="3.400" height="3.500" fill="#8b8b8b"/><rect x="939.50" y="237.600" width="2.600" height="9.500" rx="1.200" fill="url(#rg)"/><rect x="945.60" y="236.300" width="3.400" height="3.500" fill="#8b8b8b"/><rect x="947.30" y="237.600" width="2.600" height="9.500" rx="1.200" fill="url(#rg)"/><rect x="953.40" y="236.300" width="3.400" height="3.500" fill="#8b8b8b"/><rect x="955.10" y="237.600" width="2.600" height="9.500" rx="1.200" fill="url(#rg)"/><rect x="961.20" y="236.300" width="3.400" height="3.500" fill="#8b8b8b"/><rect x="962.90" y="237.600" width="2.600" height="9.500" rx="1.200" fill="url(#rg)"/><rect x="969.00" y="236.300" width="3.400" height="3.500" fill="#8b8b8b"/><rect x="970.70" y="237.600" width="2.600" height="9.500" rx="1.200" fill="url(#rg)"/></svg>

<!-- login window (STAM-2 Klient) -->
<div id="login">
 <div id="ban">
  <div id="banl">
   <div id="logo"><span style="transform:scaleX(.88);margin-right:-3px">S</span><span style="transform:scaleX(.97);margin-right:-1.2px">a</span><span style="transform:scaleX(1.22);margin-right:2.4px">t</span><span style="transform:scaleX(.98);margin-right:-1px">e</span><span style="transform:scaleX(1.25);margin-right:2px">l</span></div>
   <svg class="abs" style="left:91.400px;top:9px" width="14" height="14" viewBox="-7 -7 14 14"><circle r="6.4" fill="#fff"/><g stroke="#2a2625" stroke-width="1" fill="none"><path d="M0-6.4V6.4M-5.54-3.2L5.54 3.2M-5.54 3.2L5.54-3.2"/></g></svg>
   <div id="stam">STAM<span style="margin-left:2.5px">-2</span></div>
  </div>
  <svg class="abs" style="left:113px;top:0" width="242" height="63.6" viewBox="448 209 242 63.6">
   <defs><linearGradient id="mon1" x1="0" y1="0" x2="0.3" y2="1"><stop offset="0" stop-color="#8d8480"/><stop offset="1" stop-color="#59504d"/></linearGradient><linearGradient id="mon2" x1="0" y1="0" x2="0.4" y2="1"><stop offset="0" stop-color="#7a716d"/><stop offset="1" stop-color="#463e3b"/></linearGradient><linearGradient id="mon3" x1="0" y1="0" x2="0.5" y2="1"><stop offset="0" stop-color="#675e5a"/><stop offset="1" stop-color="#362f2c"/></linearGradient></defs>
   <polygon points="488.800,225.900 506.400,223.800 504.600,240 486.400,240" fill="#2a2422"/>
   <polygon points="489.600,226.700 505.400,224.800 503.800,240 487.600,240" fill="url(#mon1)"/>
   <path d="M488.800,225.900 506.400,223.800" stroke="#a59c98" stroke-width="0.8"/>
   <polygon points="510.200,221.400 533.300,218.800 530.400,240 507.200,240" fill="#2a2422"/>
   <polygon points="511.400,222.600 532,220.300 529.200,240 508.800,240" fill="url(#mon2)"/>
   <path d="M510.200,221.400 533.300,218.800" stroke="#9a918d" stroke-width="0.8"/>
   <polygon points="541,216.100 572.600,211.800 575.500,212.400 570,240 536.300,240" fill="#231e1c"/>
   <polygon points="542.400,217.600 571.200,213.700 566.200,240 538.200,240" fill="url(#mon3)"/>
   <path d="M541,216.100 572.600,211.800" stroke="#8a817d" stroke-width="0.8"/>
   <!-- operator -->
   <ellipse cx="641.600" cy="227" rx="12.600" ry="13.400" fill="#7b6a58"/>
   <path d="M631.600 240 L631.600 224 Q632 219.400 642 219.400 Q652 219.400 652.600 224 L652.600 240Z" fill="#c59b83"/>
   <path d="M633.600 227.400q3.600-1.600 6.400 0M644.200 227.400q3.200-1.600 6.400 0" stroke="#6b5040" stroke-width="0.9" fill="none"/>
   <ellipse cx="637" cy="228.600" rx="1.700" ry="0.800" fill="#4d4a52"/><ellipse cx="647.400" cy="228.600" rx="1.700" ry="0.800" fill="#4d4a52"/>
   <rect x="627.200" y="228.400" width="2.600" height="6" rx="1" fill="#e6c8cc"/><rect x="653.200" y="227.400" width="2.200" height="7" rx="1" fill="#e4e0dc"/>
   <path d="M622 272 L622 250 Q642 238 662 250 L662 272Z" fill="#2a2a2c"/>
  </svg>
 </div>
 <div id="lbody">
  <div class="lb" style="left:-0.5px;top:9.6px">Użytkownik</div>
  <div class="lb" style="left:-0.5px;top:27.4px">Hasło</div>
  <div class="btn hot" style="left:0.1px;top:42.6px;width:120px;height:14.8px"></div>
  <div class="btn" style="left:0.1px;top:61.3px;width:120px;height:14.8px"></div>
 </div>
</div>

<!-- Serwery window -->
<div id="srv">
 <svg id="srvglass" width="389.3" height="189.8" viewBox="396 233.3 389.3 189.8">
  <defs>
   <linearGradient id="tb1" gradientUnits="userSpaceOnUse" x1="396" y1="0" x2="785" y2="0" gradientTransform="translate(79,0) skewX(-18)"><stop offset="0.0000" stop-color="#b6babd"/><stop offset="0.0874" stop-color="#aeb2b6"/><stop offset="0.1234" stop-color="#a0a5aa"/><stop offset="0.1542" stop-color="#62676d"/><stop offset="0.2185" stop-color="#595e64"/><stop offset="0.2262" stop-color="#a2adba"/><stop offset="0.2648" stop-color="#a0abb8"/><stop offset="0.2725" stop-color="#8c95a1"/><stop offset="0.3136" stop-color="#7f8893"/><stop offset="0.3213" stop-color="#5a6067"/><stop offset="0.3445" stop-color="#5a6067"/><stop offset="0.3522" stop-color="#808993"/><stop offset="0.3985" stop-color="#7b848e"/><stop offset="0.4062" stop-color="#5e646b"/><stop offset="0.4422" stop-color="#50555b"/><stop offset="0.4781" stop-color="#2c2f33"/><stop offset="0.5244" stop-color="#1f2225"/><stop offset="0.7455" stop-color="#1f2225"/><stop offset="0.7532" stop-color="#7d8890"/><stop offset="0.8406" stop-color="#77828a"/><stop offset="0.8483" stop-color="#2c3035"/><stop offset="0.8920" stop-color="#2e3338"/><stop offset="0.9023" stop-color="#566067"/><stop offset="1.0000" stop-color="#5b656c"/></linearGradient>
   <linearGradient id="tb2" x1="0" y1="0" x2="0" y2="1"><stop offset="0" stop-color="#000" stop-opacity=".3"/><stop offset="0.2" stop-color="#000" stop-opacity=".2"/><stop offset="0.55" stop-color="#000" stop-opacity="0"/><stop offset="0.9" stop-color="#fff" stop-opacity=".16"/><stop offset="1" stop-color="#fff" stop-opacity=".1"/></linearGradient>
   <filter id="gb" x="-30%" y="-50%" width="160%" height="200%"><feGaussianBlur stdDeviation="2.2"/></filter>
  </defs>
  <rect x="396" y="233.3" width="389.3" height="20" fill="url(#tb1)"/>
  <g filter="url(#gb)"><ellipse cx="636" cy="243" rx="13" ry="9" fill="#b0a9a6" opacity=".85"/><ellipse cx="644" cy="248" rx="9" ry="5" fill="#c9d0dc" opacity=".7"/><ellipse cx="627" cy="246" rx="6" ry="8" fill="#8a8582" opacity=".7"/></g>
  <rect x="448" y="233.300" width="337.300" height="20" fill="url(#tb2)"/><rect x="396" y="233.300" width="52" height="20" fill="url(#tb2)" opacity=".35"/>
  <rect x="396" y="253" width="5" height="104" fill="#a9adb1"/>
  <rect x="396" y="357" width="5" height="4" fill="#3a3d40"/>
  <rect x="780.6" y="253" width="5" height="28" fill="#59636a"/>
  <rect x="396.5" y="233.8" width="388.3" height="188.8" rx="4.600" fill="none" stroke="#8f9193" stroke-width="1"/>
  <path d="M400 234.300H781" stroke="#d6d8da" stroke-width="0.8" opacity=".7"/>
  <!-- inactive close button -->
  <path d="M747.5 234.300V243.500Q747.500 246.500 750.500 246.500H779.800Q782.800 246.500 782.800 243.500V234.300" fill="rgba(255,255,255,.03)" stroke="#9da3a8" stroke-width="0.8" opacity=".8"/>
  <path d="M762.600 237.400L768 243M768 237.400L762.600 243" stroke="#2a2d30" stroke-width="3.200" stroke-linecap="square" opacity=".7"/>
  <path d="M762.600 237.400L768 243M768 237.400L762.600 243" stroke="#fff" stroke-width="1.900" stroke-linecap="butt"/>
  <!-- title icon -->
  <rect x="401.200" y="237.400" width="10.800" height="10.800" fill="#a4a6a8"/><rect x="402.200" y="238.400" width="8.800" height="8.800" fill="#2c2a33"/>
  <circle cx="407.400" cy="242.400" r="3.500" fill="#f4c20c"/><circle cx="408.200" cy="241.800" r="1.700" fill="#f08a16"/><path d="M402.200 243.500q1.500-3.500 3-4v7.700h-3z" fill="#15141a"/>
 </svg>
 <div class="ttl" style="left:19.6px;top:3.8px;text-shadow:0 0 3px #fff,0 0 5px #fff,0 0 7px #fff,0 0 9px rgba(255,255,255,.8)">Serwery</div>
 <div id="srvcl">
  <div id="lst"><div id="sel"></div></div>
  <div class="btn" style="left:4.6px;top:142.8px;width:84px"><span>Dodaj</span></div>
  <div class="btn" style="left:94.4px;top:142.8px;width:83.8px"><span>Usuń</span></div>
  <div class="btn hot" style="left:183.6px;top:142.8px;width:84.4px"><span>Edycja</span></div>
  <div class="btn" style="left:291.4px;top:142.8px;width:84.6px"><span>Zamknij</span></div>
 </div>
</div>

<!-- Serwer dialog -->
<div id="dlg">
 <svg class="abs" style="left:0;top:0" width="183" height="20" viewBox="0 0 183 20"><defs><filter id="db" x="-20%" y="-80%" width="140%" height="260%"><feGaussianBlur stdDeviation="1.5"/></filter><radialGradient id="dr" cx="0.5" cy="0.5" r="0.5"><stop offset="0" stop-color="#fff" stop-opacity=".5"/><stop offset="1" stop-color="#fff" stop-opacity="0"/></radialGradient></defs><ellipse cx="82" cy="10" rx="58" ry="12" fill="url(#dr)"/><g filter="url(#db)" fill="#8fa9cc" opacity=".6"><rect x="33" y="4.500" width="32" height="2.600"/><rect x="36" y="15" width="44" height="2.400"/></g><ellipse cx="18" cy="10" rx="20" ry="7" fill="url(#dr)"/></svg>
 <div class="ttl" style="left:5.2px;top:4.2px">Serwer</div>
 <div id="dclose"><svg width="31" height="12" viewBox="0 0 31 12" style="position:absolute;left:0;top:0"><path d="M12.600 3.200L18.200 9M18.200 3.200L12.600 9" stroke="#5a1a10" stroke-width="3.300" stroke-linecap="square" opacity=".75"/><path d="M12.600 3.200L18.200 9M18.200 3.200L12.600 9" stroke="#fff" stroke-width="1.900"/></svg></div>
 <div id="dlgcl">
 <div class="abs" style="left:0.7px;top:0.3px">
  <div class="fl" style="top:8.4px"><span>Nazwa serwera</span></div>
  <div class="fl" style="top:29.6px"><span>Adres</span></div>
  <div class="fl" style="top:51px"><span>Port</span></div>
  <div class="inp" style="top:6.3px"><span style="transform:scaleX(.815)">STAM-2 DEMO</span></div>
  <div class="inp" style="top:28px"><span style="transform:scaleX(.905)">89.171.60.146</span></div>
  <div class="inp" style="top:48.4px"><span style="transform:scaleX(.9)">3000</span></div>
  <div class="btn hot" style="left:6.4px;top:70.8px;width:63.4px;height:16.6px;line-height:14.2px"><span>Zastosuj</span></div>
  <div class="btn" style="left:78.1px;top:70.8px;width:70px"><span>Zamknij</span></div>
 </div>
 </div>
</div>

</div>
</body>
</html>
